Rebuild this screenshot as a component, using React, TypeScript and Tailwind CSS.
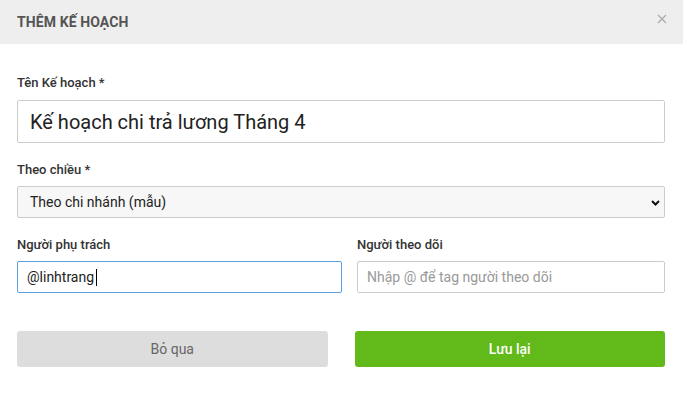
import { useState } from 'react';

type Option = { value: string; label: string };

const dimensions: Option[] = [
  { value: 'branch', label: 'Theo chi nhánh (mẫu)' },
  { value: 'dept', label: 'Theo phòng ban' },
];

function Label({ children }: { children: React.ReactNode }) {
  return <div className="text-[13px] leading-[16px] font-medium text-[#333]">{children}</div>;
}

export default function App() {
  const [title, setTitle] = useState('Kế hoạch chi trả lương Tháng 4');
  const [dim, setDim] = useState('branch');

  return (
    <div className="w-[683px] h-[397px] bg-white font-['Roboto',sans-serif] text-[#333]">
      <div className="h-[44px] bg-[#eeeeee] flex items-center justify-between pl-[17px] pr-[16px]">
        <h1 className="text-[14px] font-bold text-[#555] tracking-[0.1px]">THÊM KẾ HOẠCH</h1>
        <svg width="10" height="10" viewBox="0 0 10 10" className="mt-[-6px]">
          <path d="M1 1 L9 9 M9 1 L1 9" stroke="#aaa" strokeWidth="1.3" />
        </svg>
      </div>

      <div className="pl-[17px] pr-[18px] pt-[31px]">
        <Label>Tên Kế hoạch *</Label>
        <input
          value={title}
          onChange={e => setTitle(e.target.value)}
          className="mt-[9px] w-full h-[43px] border border-[#cccccc] rounded-[2px] pl-[12px] text-[20px] text-[#222] outline-none"
        />

        <div className="mt-[19px]">
          <Label>Theo chiều *</Label>
        </div>
        <div className="relative mt-[8px]">
          <select
            value={dim}
            onChange={e => setDim(e.target.value)}
            className="appearance-none w-full h-[32px] bg-[#f7f7f7] border border-[#cccccc] rounded-[2px] pl-[12px] text-[14px] text-[#222] outline-none"
          >
            {dimensions.map(o => (
              <option key={o.value} value={o.value}>{o.label}</option>
            ))}
          </select>
          <svg width="9" height="6" viewBox="0 0 9 6" className="absolute right-[5px] top-[14px] pointer-events-none">
            <path d="M1 1 L4.5 4.5 L8 1" stroke="#111" strokeWidth="2" fill="none" />
          </svg>
        </div>

        <div className="flex gap-[15px] mt-[19px]">
          <div className="w-[325px]">
            <Label>Người phụ trách</Label>
            <div className="mt-[8px] h-[32px] border border-[#5a9fe0] rounded-[2px] pl-[9px] flex items-center text-[14px] text-[#222]">
              @linhtrang
              <span className="ml-[2px] w-px h-[17px] bg-black" />
            </div>
          </div>
          <div className="flex-1">
            <Label>Người theo dõi</Label>
            <input
              placeholder="Nhập @ để tag người theo dõi"
              className="mt-[8px] w-full h-[32px] border border-[#cccccc] rounded-[2px] pl-[9px] text-[14px] placeholder:text-[#999] outline-none"
            />
          </div>
        </div>

        <div className="grid grid-cols-2 gap-[27px] mt-[38px]">
          <button className="h-[36px] rounded-[3px] bg-[#dddddd] text-[14px] text-[#666]">Bỏ qua</button>
          <button className="h-[36px] rounded-[3px] bg-[#61b91a] text-[14px] font-medium text-white">Lưu lại</button>
        </div>
      </div>
    </div>
  );
}
